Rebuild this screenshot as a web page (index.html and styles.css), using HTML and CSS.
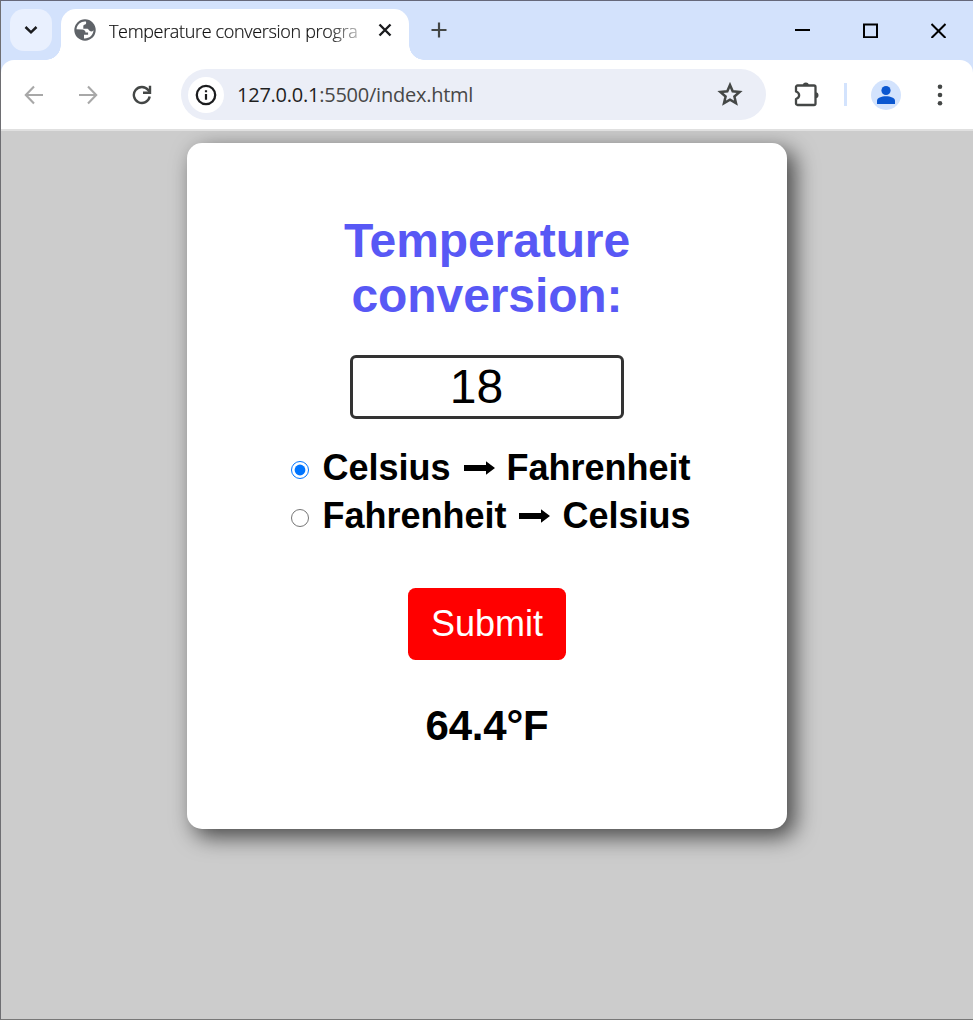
FILE: index.html
```html
<!DOCTYPE html>
<html lang="en">
<head>
<meta charset="utf-8">
<title>Temperature conversion program</title>
<link rel="stylesheet" href="styles.css">
</head>
<body>
<div class="window">
  <header class="tabstrip">
    <button class="tab-search" aria-label="Search tabs"><svg width="14" height="10" viewBox="0 0 14 10"><path d="M1.500 2 7 7.300l5.500-5.300" fill="none" stroke="#1b1c1e" stroke-width="2.500"/></svg></button>
    <div class="tab">
      <svg class="globe" width="22" height="22" viewBox="0 0 22 22"><circle cx="11" cy="11" r="10.700" fill="#5f6368"/><path d="M12 2.600C8 1.800 3 5 2.500 10.200l5.600.2c2.200.1 3.400 1.300 3.400 3.100h2.600v2.300H10v3.600c4.800.4 9.300-3.200 9.500-8.200-1 1.200-2.200 1.600-3.700.8-1.200-.7-1.200-2-2.400-2.200H9.300V7.400c0-1.300.6-1.900 1.900-2 1.200-.2 1-1.400.8-2.800z" fill="#fff"/></svg>
      <span class="tab-title">Temperature conversion progra</span>
      <svg class="tab-close" width="14" height="14" viewBox="0 0 14 14"><path d="M1.500 1.500l11 11M12.500 1.500l-11 11" stroke="#1b1c1e" stroke-width="2.400"/></svg>
    </div>
    <svg class="new-tab" width="16" height="16" viewBox="0 0 16 16"><path d="M8 .5v15M.5 8h15" stroke="#444746" stroke-width="2.200"/></svg>
    <div class="window-controls">
      <svg width="15" height="16" viewBox="0 0 15 16"><path d="M0 8h15" stroke="#000" stroke-width="2"/></svg>
      <svg width="15" height="16" viewBox="0 0 15 16"><path d="M1 3h13v13H1z" transform="translate(0 -.5) scale(1 .98)" fill="none" stroke="#000" stroke-width="2"/></svg>
      <svg width="15" height="16" viewBox="0 0 15 16"><path d="M.5 2l14 14M14.500 2l-14 14" stroke="#000" stroke-width="2"/></svg>
    </div>
  </header>
  <nav class="toolbar">
    <svg class="back" width="20" height="20" viewBox="0 0 20 20"><path d="M19 10H2M10 1.500 1.800 10l8.200 8.500" fill="none" stroke="#a8a8a8" stroke-width="2.100"/></svg>
    <svg class="forward" width="20" height="20" viewBox="0 0 20 20"><path d="M1 10h17M10 1.500l8.200 8.500-8.200 8.500" fill="none" stroke="#a8a8a8" stroke-width="2.100"/></svg>
    <svg class="reload" width="20" height="20" viewBox="0 0 20 20"><path d="M17.700 11.500A8 8 0 1 1 16.200 5.100L18 7" fill="none" stroke="#444746" stroke-width="2.400"/><path d="M18 .8v7h-7" fill="none" stroke="#444746" stroke-width="2.400"/></svg>
    <div class="address">
      <span class="info"><svg width="22" height="22" viewBox="0 0 22 22"><circle cx="11" cy="11" r="9.200" fill="none" stroke="#1b1c1e" stroke-width="2.300"/><path d="M11 10v5.700M11 6.200v2.100" stroke="#1b1c1e" stroke-width="2.200"/></svg></span>
      <span class="url"><span class="host">127.0.0.1</span>:5500/index.html</span>
      <svg class="star" width="26" height="25" viewBox="0 0 26 25"><path d="M13 3l2.700 6.300 6.900.6-5.200 4.600 1.600 6.700-6-3.500-6 3.500 1.600-6.700-5.200-4.600 6.900-.6z" fill="none" stroke="#444746" stroke-width="2.500"/></svg>
    </div>
    <svg class="extensions" width="26" height="26" viewBox="0 0 26 26"><path d="M4.500 3.500h16.500a1.500 1.500 0 0 1 1.500 1.500v16.500a1.500 1.500 0 0 1-1.500 1.500H4.500A1.500 1.500 0 0 1 3 21.500V17c4.200-1.500 4.200-6 0-7.500V5a1.500 1.500 0 0 1 1.500-1.500z" fill="none" stroke="#444746" stroke-width="2.300" stroke-linejoin="round"/><path d="M9.800 3.500a3 3 0 0 1 6 0zM22.500 10.200a3 3 0 0 1 0 6z" fill="#444746"/></svg>
    <span class="divider"></span>
    <span class="profile"><svg width="20" height="20" viewBox="0 0 20 20"><circle cx="10" cy="5.500" r="4.600" fill="#0b57d0"/><path d="M1 19v-3.200C1 9.800 19 9.800 19 15.800V19z" fill="#0b57d0"/></svg></span>
    <svg class="more" width="6" height="22" viewBox="0 0 6 22"><g fill="#444746"><circle cx="3" cy="2.700" r="2.300"/><circle cx="3" cy="11" r="2.300"/><circle cx="3" cy="19.300" r="2.300"/></g></svg>
  </nav>
  <main class="page">
    <form class="card" onsubmit="return false">
      <h1>Temperature conversion:</h1>
      <input class="temperature" type="text" value="18" aria-label="Temperature">
      <div class="options">
        <label><input type="radio" name="unit" checked><span>Celsius</span><svg class="arrow" width="31" height="16" viewBox="0 0 31 16"><path d="M0 5h22V1.200L31 8l-9 6.800V11H0z"/></svg><span>Fahrenheit</span></label>
        <label><input type="radio" name="unit"><span>Fahrenheit</span><svg class="arrow" width="31" height="16" viewBox="0 0 31 16"><path d="M0 5h22V1.200L31 8l-9 6.800V11H0z"/></svg><span>Celsius</span></label>
      </div>
      <button class="submit">Submit</button>
      <p class="result">64.4°F</p>
    </form>
  </main>
</div>
</body>
</html>
```
FILE: styles.css
```css
* { box-sizing: border-box; }
body { margin: 0; font-family: "Liberation Sans", Arial, sans-serif; }
svg { display: block; flex: none; }
button { border: 0; padding: 0; }
.window {
  height: 1020px;
  display: flex;
  flex-direction: column;
  border: solid #66687a;
  border-width: 1px 0 1px 1px;
  border-left-color: #6e6e72;
  border-bottom-color: #777;
  background: #d3e2fc;
  overflow: hidden;
}
.tabstrip { height: 59px; display: flex; align-items: flex-start; padding-left: 9px; }
.tab-search {
  width: 42px; height: 42px; margin-top: 8px;
  display: grid; place-items: center;
  border-radius: 14px; background: #e9f0fe;
}
.tab {
  position: relative;
  width: 348px; height: 51px; margin: 8px 0 0 9px;
  display: flex; align-items: center;
  padding: 0 17px 9px 13px;
  border-radius: 15px 15px 0 0;
  background: #fff;
}
.tab::before, .tab::after {
  content: "";
  position: absolute; bottom: 0;
  width: 15px; height: 15px;
}
.tab::before { left: -15px; background: radial-gradient(circle at 0 0, transparent 14.500px, #fff 15px); }
.tab::after { right: -15px; background: radial-gradient(circle at 100% 0, transparent 14.500px, #fff 15px); }
.tab-title {
  width: 254px; margin-left: 13px; padding-top: 2px;
  white-space: nowrap;
  font: 300 18px/24px "Open Sans", "Noto Sans", sans-serif;
  letter-spacing: -.33px;
  color: #111;
  -webkit-text-stroke: .2px #111;
  -webkit-mask-image: linear-gradient(90deg, #000 86%, transparent 104%);
  mask-image: linear-gradient(90deg, #000 86%, transparent 104%);
}
.tab-close { margin-left: auto; }
.new-tab { margin: 21px 0 0 22px; }
.window-controls { display: flex; gap: 53px; margin: 21px 27px 0 auto; }
.toolbar {
  height: 71px; flex: none;
  display: flex; align-items: center;
  padding: 0 30px 0 23px;
  border-bottom: 2px solid #e0e0e0;
  border-radius: 13px 13px 0 0;
  background: #fff;
}
.forward { margin-left: 34px; }
.reload { margin-left: 34px; }
.address {
  width: 585px; height: 51px; margin-left: 29px;
  display: flex; align-items: center;
  padding: 0 23px 0 7px;
  border-radius: 26px; background: #ebeef7;
}
.info { width: 36px; height: 36px; display: grid; place-items: center; border-radius: 50%; background: #fff; }
.url { margin-left: 13px; font: 20px/28px "Open Sans", "Noto Sans", sans-serif; letter-spacing: -.24px; color: #474747; white-space: nowrap; }
.host { color: #1f1f1f; }
.star { margin-left: auto; }
.extensions { margin-left: 27px; }
.divider { width: 3px; height: 23px; margin-left: 25px; background: #d3e3fd; }
.profile { width: 30px; height: 30px; margin-left: 24px; display: grid; place-items: center; border-radius: 50%; background: #d3e3fd; }
.more { margin-left: auto; }
.page { flex: 1; display: flex; justify-content: center; align-items: flex-start; padding-top: 12px; background: #ccc; overflow: hidden; }
.card {
  width: 600px; height: 686px;
  display: flex; flex-direction: column; align-items: center;
  padding-top: 70px;
  border-radius: 15px; background: #fff;
  box-shadow: 7.500px 7.500px 22.500px rgba(0, 0, 0, .65);
}
h1 { width: 360px; margin: 0; font-size: 48px; line-height: 55px; letter-spacing: -.1px; text-align: center; color: #5858f5; }
.temperature {
  width: 274px; height: 64px; margin-top: 32px; padding: 0 21px 2px 0;
  border: 3px solid #333; border-radius: 6px;
  font: 48px "Liberation Sans", Arial, sans-serif; text-align: center; color: #000;
}
.options { margin-top: 25px; padding-left: 8px; }
label { height: 48px; display: flex; align-items: center; font-size: 36px; line-height: 48px; font-weight: bold; }
label input { width: 18px; height: 18px; margin: 4px 13px 0 0; accent-color: #0075ff; }
.arrow { margin: 0 12px 0 13px; }
.submit {
  width: 158px; height: 72px; margin-top: 48px;
  border-radius: 7.500px; background: #f00; color: #fff;
  font: 36px "Liberation Sans", Arial, sans-serif;
}
.result { margin: 42px 0 0; font-size: 42px; line-height: 48px; letter-spacing: -.2px; font-weight: bold; }
```
